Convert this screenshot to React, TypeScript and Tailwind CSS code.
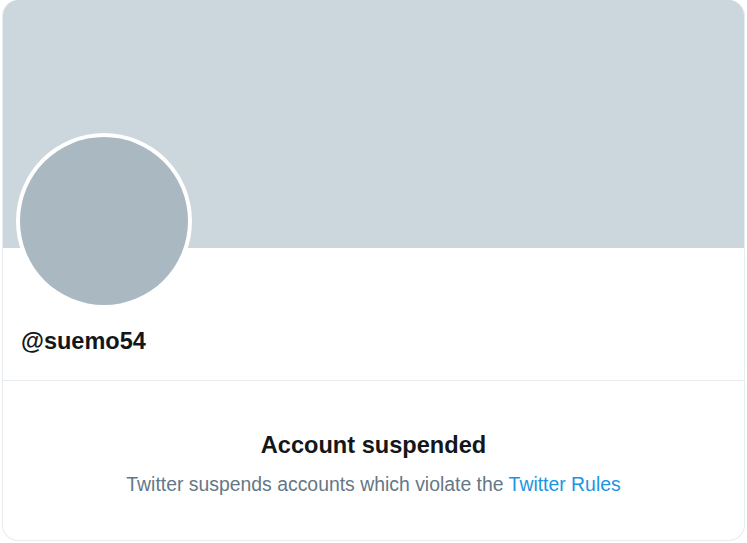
export default function App() {
  return (
    <div className="w-[747px] h-[543px] bg-white pl-[2px] pr-[2px] pb-[2px]" style={{ fontFamily: '"Liberation Sans", Arial, sans-serif' }}>
      <div className="h-full flex flex-col border border-t-0 border-[#e6ecf0] rounded-[16px] overflow-hidden bg-white">
        <div className="h-[248px] shrink-0 bg-[#ccd6dd]" />
        <div className="ml-[13px] -mt-[115px] w-[176px] h-[176px] rounded-full bg-white p-[4px] shrink-0">
          <div className="w-full h-full rounded-full bg-[#aab8c2]" />
        </div>
        <div className="h-[72px] shrink-0 flex items-center pl-[18px] pb-[6px] border-b border-[#e6ecf0]">
          <span className="text-[23.5px] font-bold text-[#14171a]">@suemo54</span>
        </div>
        <div className="flex flex-col items-center pt-[50px]">
          <h2 className="text-[23.6px] font-bold text-[#14171a] leading-[28px]">Account suspended</h2>
          <p className="mt-[13px] text-[19.4px] text-[#657786] leading-[24px]">
            Twitter suspends accounts which violate the{' '}
            <span className="text-[#1b95e0]">Twitter Rules</span>
          </p>
        </div>
      </div>
    </div>
  );
}
